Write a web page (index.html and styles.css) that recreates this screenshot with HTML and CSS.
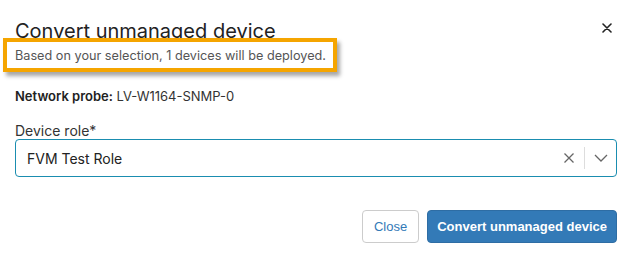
FILE: index.html
```html
<!DOCTYPE html>
<html lang="en">
<head>
    <meta charset="UTF-8">
    <title>Convert unmanaged device</title>
    <link rel="stylesheet" href="styles.css">
</head>
<body>
    <div class="modal">
        <div class="modal-header">
            <h2 class="modal-title">Convert unmanaged device</h2>
            <button class="close-x" aria-label="Close">
                <svg width="10" height="10" viewBox="0 0 10 10"><path d="M1 1L9 9M9 1L1 9" stroke="#222" stroke-width="1.6" stroke-linecap="round"/></svg>
            </button>
        </div>
        <div class="highlight">Based on your selection, 1 devices will be deployed.</div>

        <div class="probe"><strong>Network probe:</strong> LV-W1164-SNMP-0</div>

        <label class="field-label">Device role*</label>
        <div class="select">
            <span class="select-value">FVM Test Role</span>
            <span class="select-clear">
                <svg width="12" height="12" viewBox="0 0 12 12"><path d="M1.5 1.5L10.5 10.5M10.5 1.5L1.5 10.5" stroke="#666" stroke-width="1.3"/></svg>
            </span>
            <span class="select-sep"></span>
            <span class="select-arrow">
                <svg width="14" height="8" viewBox="0 0 14 8"><path d="M1 1L7 7L13 1" fill="none" stroke="#666" stroke-width="1.3"/></svg>
            </span>
        </div>

        <div class="footer">
            <button class="btn btn-default">Close</button>
            <button class="btn btn-primary">Convert unmanaged device</button>
        </div>
    </div>
</body>
</html>
```

FILE: styles.css
```css
* {
    margin: 0;
    padding: 0;
    box-sizing: border-box;
}

body {
    font-family: Inter, 'Noto Sans', sans-serif;
    background: white;
    color: #222;
    width: 634px;
    height: 255px;
    overflow: hidden;
}

.modal {
    padding: 19px 17px 0 15px;
}

.modal-header {
    display: flex;
    justify-content: space-between;
    align-items: flex-start;
    height: 19px;
}

.modal-title {
    font-size: 20px;
    font-weight: 400;
    line-height: 24px;
    color: #222;
}

.close-x {
    background: none;
    border: none;
    margin-top: 2px;
    margin-right: 5px;
    cursor: pointer;
}

.highlight {
    display: inline-block;
    margin-left: -12px;
    border: 4px solid #f5a500;
    padding: 5px 7px 4px 8px;
    font-size: 12.7px;
    line-height: 17px;
    color: #555;
    background: white;
    box-shadow: 3px 4px 4px rgba(0,0,0,0.35);
}

.probe {
    margin-top: 15px;
    font-size: 13px;
    line-height: 18px;
    color: #333;
}

.probe strong {
    font-weight: 600;
    color: #222;
}

.field-label {
    display: block;
    margin-top: 17px;
    font-size: 14px;
    line-height: 17px;
    color: #333;
}

.select {
    height: 38px;
    border: 1px solid #1a8db0;
    border-radius: 4px;
    display: flex;
    align-items: center;
    padding-left: 11px;
}

.select-value {
    flex: 1;
    font-size: 14px;
    color: #222;
}

.select-clear {
    display: flex;
    padding: 0 9px;
}

.select-sep {
    width: 1px;
    height: 22px;
    background: #ddd;
}

.select-arrow {
    display: flex;
    padding: 0 8px 0 9px;
}

.footer {
    display: flex;
    justify-content: flex-end;
    gap: 8px;
    margin-top: 33px;
}

.btn {
    font-family: 'Liberation Sans', Arial, sans-serif;
    font-size: 13px;
    height: 33px;
    border-radius: 4px;
    cursor: pointer;
}

.btn-default {
    background: white;
    border: 1px solid #ccc;
    color: #337ab7;
    padding: 0 11px;
}

.btn-primary {
    background: #337ab7;
    border: 1px solid #2e6da4;
    color: white;
    font-weight: bold;
    padding: 0 9px;
}
```
